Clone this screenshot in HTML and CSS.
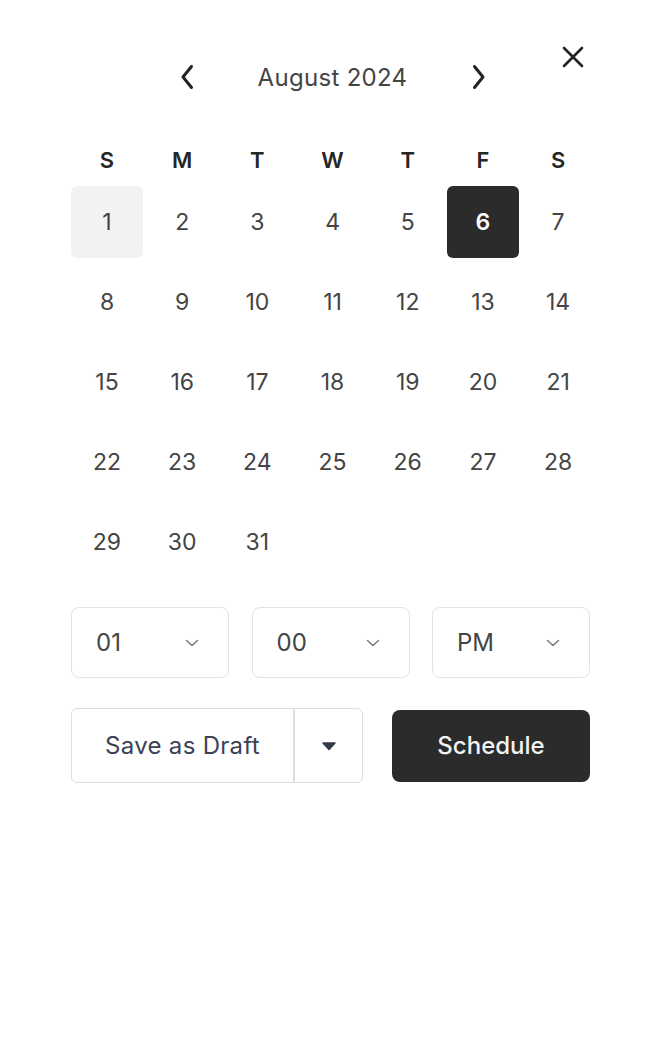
FILE: index.html
```html
<!DOCTYPE html>
<html>
<head>
<meta charset="utf-8">
<link rel="stylesheet" href="styles.css">
</head>
<body>
<div class="picker">
  <button class="close" aria-label="Close">
    <svg width="22" height="22" viewBox="0 0 22 22"><path d="M2 2 L20 20 M20 2 L2 20" stroke="#222" stroke-width="2.6" stroke-linecap="round" fill="none"/></svg>
  </button>
  <div class="header">
    <button class="nav" aria-label="Previous month">
      <svg width="16" height="26" viewBox="0 0 16 26"><path d="M12.5 2.5 L4 13 L12.5 23.5" stroke="#222" stroke-width="3" stroke-linecap="round" stroke-linejoin="round" fill="none"/></svg>
    </button>
    <div class="month">August 2024</div>
    <button class="nav" aria-label="Next month">
      <svg width="16" height="26" viewBox="0 0 16 26"><path d="M3.5 2.5 L12 13 L3.5 23.5" stroke="#222" stroke-width="3" stroke-linecap="round" stroke-linejoin="round" fill="none"/></svg>
    </button>
  </div>
  <div class="weekdays">
    <span>S</span><span>M</span><span>T</span><span>W</span><span>T</span><span>F</span><span>S</span>
  </div>
  <div class="days">
    <span class="day today">1</span><span class="day">2</span><span class="day">3</span><span class="day">4</span><span class="day">5</span><span class="day selected">6</span><span class="day">7</span>
    <span class="day">8</span><span class="day">9</span><span class="day">10</span><span class="day">11</span><span class="day">12</span><span class="day">13</span><span class="day">14</span>
    <span class="day">15</span><span class="day">16</span><span class="day">17</span><span class="day">18</span><span class="day">19</span><span class="day">20</span><span class="day">21</span>
    <span class="day">22</span><span class="day">23</span><span class="day">24</span><span class="day">25</span><span class="day">26</span><span class="day">27</span><span class="day">28</span>
    <span class="day">29</span><span class="day">30</span><span class="day">31</span>
  </div>
  <div class="time">
    <div class="select"><span>01</span><svg width="14" height="8" viewBox="0 0 14 8"><path d="M1.5 1.5 L7 6.5 L12.5 1.5" stroke="#777" stroke-width="1.5" fill="none" stroke-linecap="round" stroke-linejoin="round"/></svg></div>
    <div class="select"><span>00</span><svg width="14" height="8" viewBox="0 0 14 8"><path d="M1.5 1.5 L7 6.5 L12.5 1.5" stroke="#777" stroke-width="1.5" fill="none" stroke-linecap="round" stroke-linejoin="round"/></svg></div>
    <div class="select"><span>PM</span><svg width="14" height="8" viewBox="0 0 14 8"><path d="M1.5 1.5 L7 6.5 L12.5 1.5" stroke="#777" stroke-width="1.5" fill="none" stroke-linecap="round" stroke-linejoin="round"/></svg></div>
  </div>
  <div class="actions">
    <div class="split">
      <button class="draft">Save as Draft</button>
      <button class="caret" aria-label="More options">
        <svg width="16" height="10" viewBox="0 0 16 10"><path d="M2 2 L14 2 L8 8.5 Z" fill="#333a48" stroke="#333a48" stroke-width="1.5" stroke-linejoin="round"/></svg>
      </button>
    </div>
    <button class="schedule">Schedule</button>
  </div>
</div>
</body>
</html>
```

FILE: styles.css
```css
* { box-sizing: border-box; }
body {
  margin: 0;
  background: #fff;
  font-family: Inter, "Noto Sans", sans-serif;
  color: #3d3d3d;
}
button {
  font-family: inherit;
  background: none;
  border: none;
  padding: 0;
  cursor: pointer;
}
.picker {
  position: relative;
  width: 523px;
  margin-left: 71px;
  padding-top: 60px;
}
.close {
  position: absolute;
  left: 491px;
  top: 46px;
  width: 22px;
  height: 22px;
  display: flex;
}
.header {
  height: 34px;
  display: flex;
  align-items: center;
  justify-content: center;
}
.nav {
  width: 16px;
  height: 26px;
  display: flex;
}
.month {
  width: 276px;
  text-align: center;
  font-size: 24px;
  color: #444;
  letter-spacing: 0.3px;
}
.weekdays {
  margin-top: 52px;
  display: grid;
  grid-template-columns: repeat(7, 72px);
  column-gap: 3.2px;
  height: 28px;
  align-items: center;
}
.weekdays span {
  text-align: center;
  font-size: 22px;
  font-weight: 600;
  color: #262626;
}
.days {
  margin-top: 12px;
  display: grid;
  grid-template-columns: repeat(7, 72px);
  grid-auto-rows: 72px;
  column-gap: 3.2px;
  row-gap: 8px;
}
.day {
  display: flex;
  align-items: center;
  justify-content: center;
  font-size: 23px;
  color: #444;
  border-radius: 6px;
}
.day.today {
  background: #f2f2f2;
}
.day.selected {
  background: #2b2b2b;
  color: #fff;
  font-weight: 600;
}
.time {
  margin-top: 29px;
  width: 519px;
  display: flex;
  gap: 22.5px;
}
.select {
  flex: 1;
  height: 71px;
  border: 1px solid #e2e2e2;
  border-radius: 8px;
  display: flex;
  align-items: center;
  justify-content: space-between;
  padding: 0 29px 0 24px;
  font-size: 24px;
  color: #444;
}
.actions {
  margin-top: 30px;
  width: 519px;
  display: flex;
  align-items: center;
  gap: 29px;
}
.split {
  width: 292px;
  height: 75px;
  border: 1px solid #dcdee3;
  border-radius: 6px;
  display: flex;
}
.draft {
  width: 223px;
  height: 100%;
  border-right: 2px solid #dcdee3;
  font-size: 24px;
  color: #3a4256;
  letter-spacing: 0.3px;
}
.caret {
  flex: 1;
  display: flex;
  align-items: center;
  justify-content: center;
}
.schedule {
  flex: 1;
  height: 72px;
  background: #2b2b2b;
  color: #f2f2f2;
  border-radius: 8px;
  font-size: 24px;
  font-weight: 500;
}
```
